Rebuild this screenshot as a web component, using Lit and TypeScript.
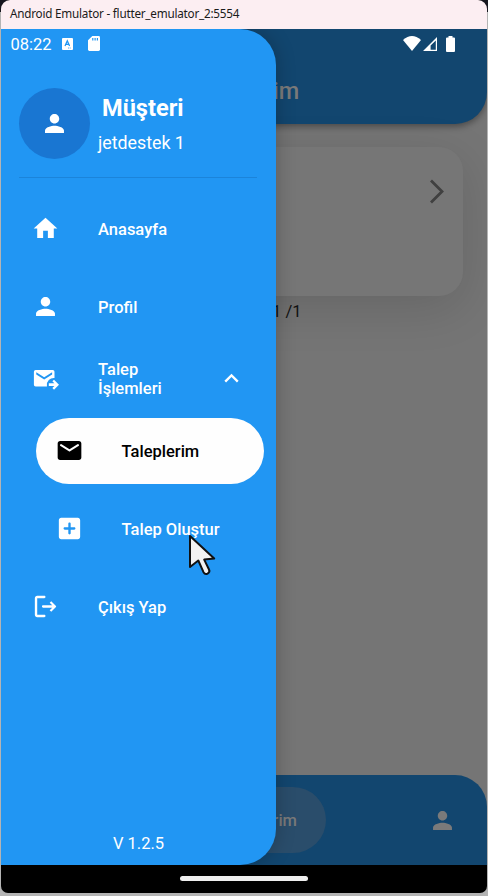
import { LitElement, html, css, svg } from "lit";
import { customElement, property } from "lit/decorators.js";

const glyphs: Record<string, unknown> = {
  home: svg`<path d="M10 20v-6h4v6h5v-8h3L12 3 2 12h3v8z"/>`,
  person: svg`<path d="M12 12c2.21 0 4-1.79 4-4s-1.79-4-4-4-4 1.79-4 4 1.79 4 4 4zm0 2c-2.67 0-8 1.34-8 4v2h16v-2c0-2.66-5.33-4-8-4z"/>`,
  outgoing: svg`<path d="M3.7 4.8h14.4a1.5 1.5 0 0 1 1.5 1.5v5.2a6 6 0 0 0-6.4 6.8v.4H3.7a1.5 1.5 0 0 1-1.5-1.5V6.3a1.5 1.5 0 0 1 1.5-1.5zm.5 2v1.9l6.7 4.2 6.7-4.2V6.8L10.9 11z" fill-rule="evenodd"/><path d="M14.8 16.1h4.7l-1.7-1.7 1.4-1.4 4.2 4.2-4.2 4.2-1.4-1.4 1.7-1.7h-4.7z"/>`,
  mail: svg`<path d="M20 4H4c-1.1 0-2 .9-2 2v12c0 1.1.9 2 2 2h16c1.1 0 2-.9 2-2V6c0-1.1-.9-2-2-2zm-.4 4.25-7.07 4.42c-.32.2-.74.2-1.06 0L4.4 8.25a.85.85 0 1 1 .9-1.44L12 11l6.7-4.19a.85.85 0 1 1 .9 1.44z"/>`,
  add: svg`<path d="M19 3H5c-1.1 0-2 .9-2 2v14c0 1.1.9 2 2 2h14c1.1 0 2-.9 2-2V5c0-1.1-.9-2-2-2zm-3 10h-3v3c0 .55-.45 1-1 1s-1-.45-1-1v-3H8c-.55 0-1-.45-1-1s.45-1 1-1h3V8c0-.55.45-1 1-1s1 .45 1 1v3h3c.55 0 1 .45 1 1s-.45 1-1 1z"/>`,
  logout: svg`<path d="M5 5h6c.55 0 1-.45 1-1s-.45-1-1-1H5c-1.1 0-2 .9-2 2v14c0 1.1.9 2 2 2h6c.55 0 1-.45 1-1s-.45-1-1-1H5V5z"/><path d="m20.85 11.5-4-4-1.3 1.35L17.7 11H10c-.55 0-1 .45-1 1s.45 1 1 1h7.7l-2.15 2.15 1.3 1.35 4-4c.28-.28.28-.72 0-1z"/>`,
  up: svg`<path d="m12 8-6 6 1.41 1.41L12 10.83l4.59 4.58L18 14z"/>`,
};

@customElement("app-icon")
class AppIcon extends LitElement {
  @property() name = "home";
  static styles = css`
    :host { display: block; width: 29px; height: 29px; flex: none; }
    svg { display: block; width: 100%; height: 100%; fill: currentColor; }
  `;
  render() {
    return html`<svg viewBox="-0.25 -0.25 24.5 24.5">${glyphs[this.name]}</svg>`;
  }
}

@customElement("drawer-item")
class DrawerItem extends LitElement {
  @property() icon = "";
  @property() label = "";
  @property({ type: Boolean }) sub = false;
  @property({ type: Boolean }) active = false;
  @property({ type: Boolean }) open = false;
  static styles = css`
    :host {
      display: grid; grid-template-columns: 29px 1fr auto; column-gap: 38px; align-items: center;
      box-sizing: border-box; height: 66px; margin: 6px 12px; padding: 0 0 1px 18px; border-radius: 33px;
      color: #fff; font-weight: 500; font-size: 16.5px; line-height: 19px; white-space: nowrap;
    }
    :host([sub]) { margin-left: 35.4px; padding-left: 18.2px; }
    :host([open]) { margin-top: 0; margin-bottom: 0; padding-right: 18.5px; }
    :host([active]) { background: #fefefe; color: #000; }
    .label { padding-top: 1px; }
    :host([open]) .label { max-width: 70px; white-space: normal; }
  `;
  render() {
    return html`<app-icon name=${this.icon}></app-icon><span class="label">${this.label}</span>
      ${this.open ? html`<app-icon name="up"></app-icon>` : ""}`;
  }
}

@customElement("app-root")
class AppRoot extends LitElement {
  static styles = css`
    :host {
      display: block; width: 488px; height: 896px; overflow: hidden; background: #b4b4b4;
      font-family: Roboto, "Noto Sans", sans-serif; position: relative;
    }
    .corners { background: #16161e; height: 12px; margin-bottom: -12px; }
    .window {
      display: grid; grid-template-rows: 29px 836px 28px; width: 486px; height: 893px; margin-left: 1px;
      border-radius: 9px 9px 7px 7px; overflow: hidden; background: #000; position: relative; isolation: isolate;
    }
    .titlebar {
      background: #fceef2; color: #1a1a1a; padding-left: 9px; line-height: 27px;
      font-family: "Noto Sans", "Open Sans", sans-serif; font-size: 11.7px; white-space: nowrap; letter-spacing: -0.22px;
    }
    .screen { display: grid; background: #757575; overflow: hidden; }
    .page, .drawer, .status { grid-area: 1 / 1; min-width: 0; }
    .page { display: grid; grid-template-rows: 95px 1fr 90px; color: #7a7a7a; }
    .appbar {
      display: flex; align-items: center; justify-content: center; padding-top: 29px; box-sizing: border-box;
      background: #12466f; border-radius: 0 0 32px 32px; box-shadow: 0 3px 6px rgba(0, 0, 0, 0.35);
      font-size: 23.5px; font-weight: 500;
    }
    .content { display: flex; flex-direction: column; padding: 23px 24px 0; }
    .card {
      height: 149px; border-radius: 24px; background: #767676; box-shadow: 0 12px 48px rgba(0, 0, 0, 0.13);
      display: flex; justify-content: flex-end; box-sizing: border-box; padding: 32px 18px;
    }
    .next { width: 16px; height: 25px; fill: none; stroke: #404040; stroke-width: 2.8; }
    .count { color: #111; font-size: 16.5px; line-height: 20px; padding: 6px 161.5px 0 0; text-align: right; }
    .tabs {
      display: flex; align-items: center; background: #12466f; border-radius: 32px 32px 0 0;
      justify-content: space-between; padding: 0 30.5px 0 161px;
    }
    .tab {
      display: flex; align-items: center; justify-content: flex-end; box-sizing: border-box; width: 164px; height: 66px;
      border-radius: 33px; background: #2a4d6b; padding-right: 29px; font-weight: 500; font-size: 16.5px;
    }
    .status {
      display: flex; align-items: center; height: 29px; padding: 0 32.5px 0 9.5px; color: #fff; z-index: 2;
      font-size: 16.5px; box-sizing: border-box;
    }
    .clock { padding-top: 2px; }
    .status svg { display: block; fill: #fff; flex: none; }
    .lang { margin-left: 10px; }
    .sd { margin-left: 15px; }
    .wifi { margin-left: auto; }
    .signal { margin-left: 2px; }
    .battery { margin-left: 9px; }
    .drawer {
      z-index: 1; width: 275px; height: 836px; box-sizing: border-box; background: #2196f3;
      border-radius: 0 36px 36px 0; box-shadow: 0 0 20px rgba(0, 0, 0, 0.24); color: #fff;
      display: flex; flex-direction: column;
    }
    .profile {
      display: flex; margin: 59px 19px 0 18px; height: 89px; border-bottom: 1px solid #1b84da;
    }
    .avatar {
      display: flex; align-items: center; justify-content: center; width: 71px; height: 71px;
      border-radius: 50%; background: #1976d2; flex: none;
    }
    .who { padding-left: 8px; }
    .name { font-size: 23.6px; font-weight: 700; line-height: 28px; padding: 6px 0 0 4px; }
    .user { font-size: 17.8px; line-height: 22px; padding-top: 10px; }
    .menu { display: flex; flex-direction: column; padding-top: 12px; }
    .version { margin-top: auto; text-align: center; font-size: 16.5px; line-height: 20px; padding-bottom: 11px; }
    .navbar { display: flex; align-items: center; justify-content: center; padding-bottom: 1px; }
    .handle { width: 128px; height: 5px; border-radius: 3px; background: #eee; }
    .cursor { position: absolute; z-index: 3; left: 187px; top: 533px; width: 30px; height: 44px; }
  `;

  render() {
    return html`
      <div class="corners"></div>
      <div class="window">
        <div class="titlebar">Android Emulator - flutter_emulator_2:5554</div>
        <div class="screen">
          <div class="page">
            <div class="appbar">Taleplerim</div>
            <div class="content">
              <div class="card">
                <svg class="next" viewBox="0 0 16 25"><path d="M2 1.5 13 12.5 2 23.5"/></svg>
              </div>
              <div class="count">1 /1</div>
            </div>
            <div class="tabs">
              <div class="tab">Taleplerim</div>
              <app-icon name="person"></app-icon>
            </div>
          </div>
          <div class="drawer">
            <div class="profile">
              <div class="avatar"><app-icon name="person"></app-icon></div>
              <div class="who">
                <div class="name">Müşteri</div>
                <div class="user">jetdestek 1</div>
              </div>
            </div>
            <div class="menu">
              <drawer-item icon="home" label="Anasayfa"></drawer-item>
              <drawer-item icon="person" label="Profil"></drawer-item>
              <drawer-item icon="outgoing" label="Talep İşlemleri" open></drawer-item>
              <drawer-item icon="mail" label="Taleplerim" sub active></drawer-item>
              <drawer-item icon="add" label="Talep Oluştur" sub></drawer-item>
              <drawer-item icon="logout" label="Çıkış Yap"></drawer-item>
            </div>
            <div class="version">V 1.2.5</div>
          </div>
          <div class="status">
            <span class="clock">08:22</span>
            <svg class="lang" width="11" height="12" viewBox="0 0 11 12">
              <rect width="11" height="12" rx="1"/>
              <path d="M3 8 5.3 2.8 7.6 8M3.8 6.4h3" fill="none" stroke="#2196f3" stroke-width="1.3"/>
              <path d="M6 10h1m.7 0h1" stroke="#2196f3" stroke-width=".8"/>
            </svg>
            <svg class="sd" width="12" height="15" viewBox="0 0 12 15">
              <path d="M4.3 0H10.6Q12 0 12 1.4V13.6Q12 15 10.6 15H1.4Q0 15 0 13.6V4.3z"/>
              <path d="M4.8 2v2.4M7.1 2v2.4M9.4 2v2.4" stroke="#2196f3" stroke-width="1.2"/>
            </svg>
            <svg class="wifi" width="18" height="15" viewBox="0 0 18 15"><path d="M0 4Q9-4 18 4L9 15z"/></svg>
            <svg class="signal" width="14" height="14" viewBox="0 0 14 14">
              <path d="M14 0V14H0zM12.8 3.6 7.6 8.4V12.8h5.2z" fill-rule="evenodd"/>
            </svg>
            <svg class="battery" width="9" height="16" viewBox="0 0 9 16">
              <path d="M2.5 0h4v1.5H8q1 0 1 1V15q0 1-1 1H1q-1 0-1-1V2.5q0-1 1-1h1.5z"/>
            </svg>
          </div>
        </div>
        <div class="navbar"><div class="handle"></div></div>
      </div>
      <svg class="cursor" viewBox="0 0 30 44">
        <path d="M3 3V34L11.3 27.5 16.5 39.2Q18 41.8 20.6 40.6 23.3 39 22 36.5L17.2 26.6 27.2 25.5z"
          fill="#f2f2f2" stroke="#111" stroke-width="2" stroke-linejoin="round"/>
      </svg>
    `;
  }
}
